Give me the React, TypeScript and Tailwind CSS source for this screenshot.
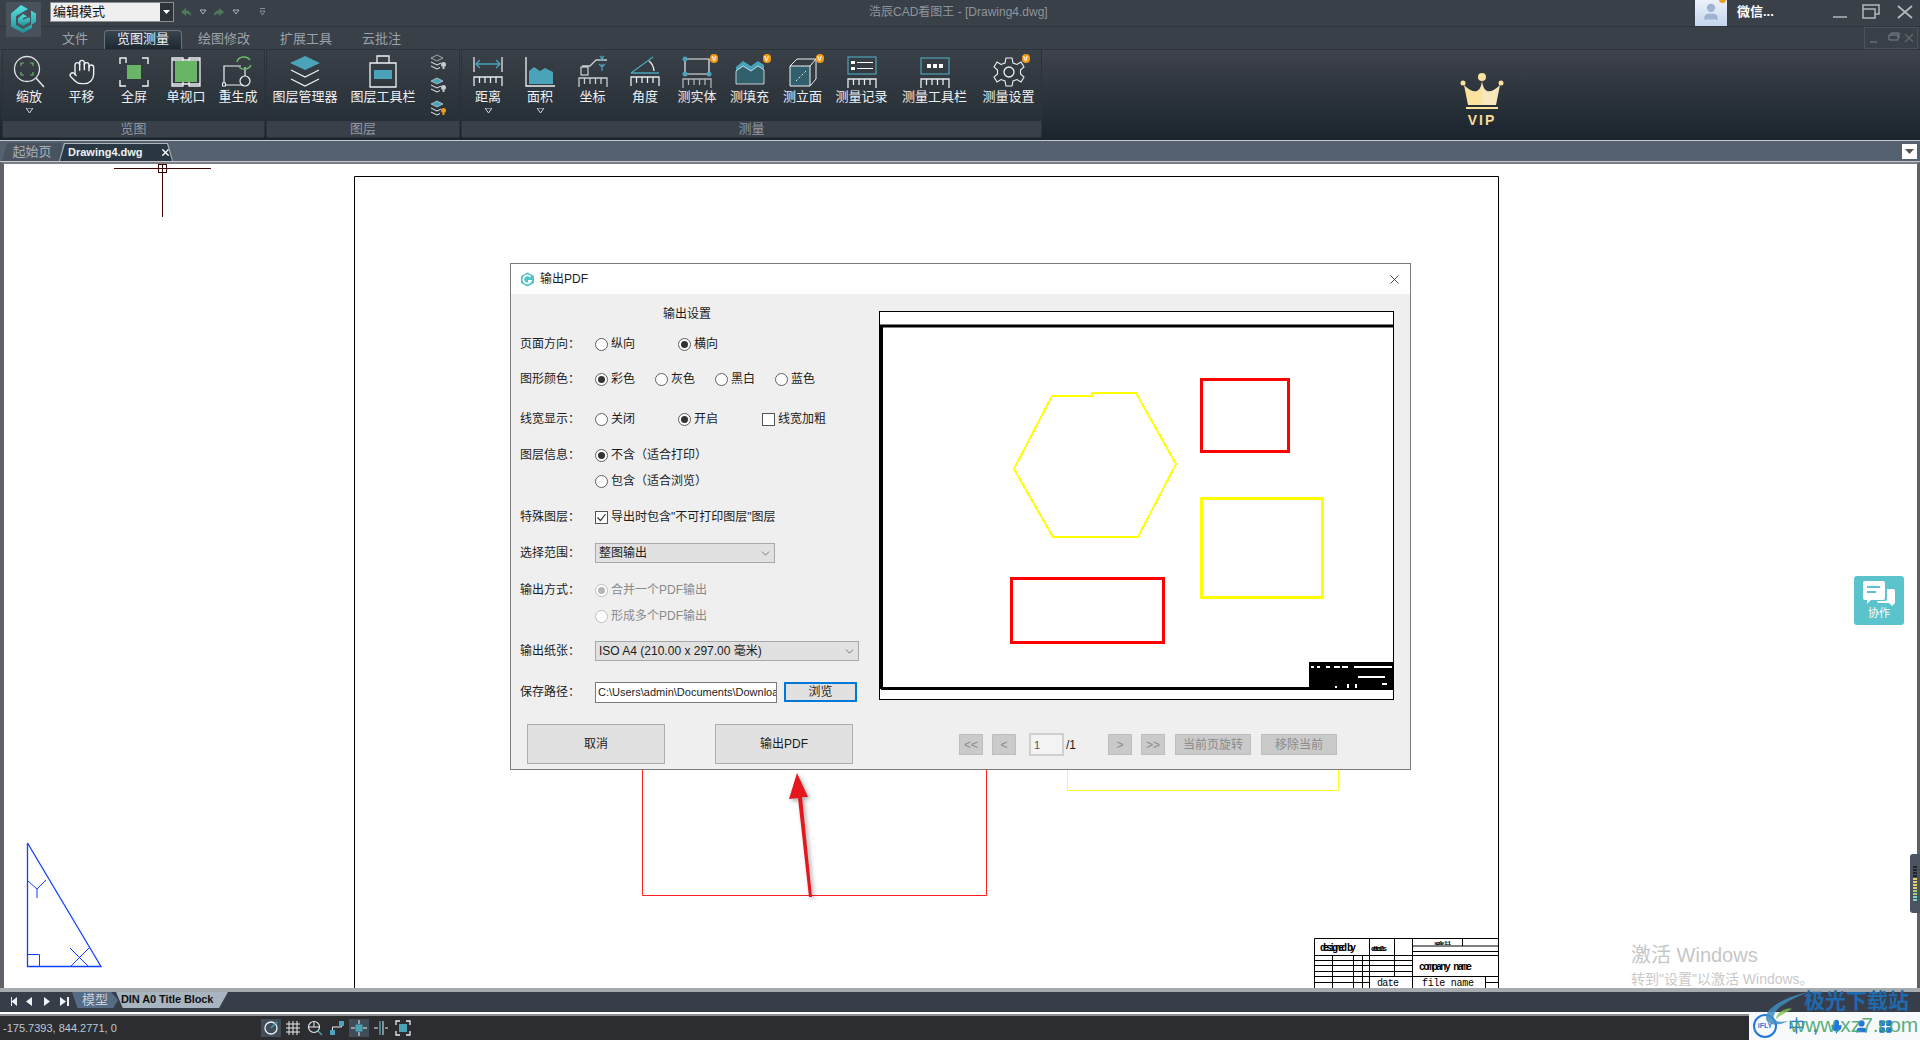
import { Hand, Mic, User, LayoutGrid, X, ChevronDown } from "lucide-react";
import type { ReactNode } from "react";

const Tri = ({ className = "" }: { className?: string }) => (
  <svg width="7" height="5" viewBox="0 0 7 5" className={className}>
    <path d="M0 0H7L3.5 5Z" fill="none" stroke="#d5d9dd" strokeWidth="1" />
  </svg>
);

const Ruler = ({ y = 24, c = "#e8ecef" }: { y?: number; c?: string }) => (
  <path d={`M3 ${y + 9}V${y}H31V${y + 9}M8.5 ${y}V${y + 6}M14 ${y}V${y + 6}M19.500 ${y}V${y + 6}M25 ${y}V${y + 6}`} fill="none" stroke={c} strokeWidth="1.3" />
);

const Svg = ({ children }: { children: ReactNode }) => (
  <svg width="34" height="34" viewBox="0 0 34 34" fill="none">
    {children}
  </svg>
);

const Logo = () => (
  <svg width="35" height="35" viewBox="0 0 35 35" className="absolute left-[6px] top-[2px]">
    <defs>
      <linearGradient id="logo" x1="0" x2="0" y1="0" y2="1">
        <stop offset="0" stopColor="#52e3e0" />
        <stop offset="1" stopColor="#239096" />
      </linearGradient>
    </defs>
    <rect width="35" height="35" fill="#47525c" />
    <path d="M15 3L22 7L10 14V23L17 27L26 22V26L17 31L5 24.500V11.500ZM25 8.500L30 11.500V20L25 23Z" fill="url(#logo)" />
    <path d="M17 12L24 16V20L17 24L12 21V16.500Z" fill="url(#logo)" />
    <path d="M17 17L24 14" stroke="#47525c" strokeWidth="1.500" />
  </svg>
);

const ZoomIcon = () => (
  <Svg>
    <circle cx="15" cy="14" r="12.500" stroke="#dfe3e6" strokeWidth="1.3" />
    <path d="M24 23L32 32" stroke="#dfe3e6" strokeWidth="1.6" />
    <path d="M9 11V8H12M18 8H21V11M21 17V20H18M12 20H9V17" stroke="#6ab565" strokeWidth="1.2" />
  </Svg>
);
const FullIcon = () => (
  <Svg>
    <path d="M9 8V3H3V3M3 9V3H9M25 3H31V9M31 25V31H25M9 31H3V25" stroke="#f0f2f4" strokeWidth="1.4" />
    <rect x="10" y="10" width="14" height="14" fill="#6ab565" />
  </Svg>
);
const ViewIcon = () => (
  <Svg>
    <path d="M3 3H14V31H3ZM20 3H31V31H20ZM3 5H31M3 29H31" stroke="#eef1f3" strokeWidth="1.3" />
    <rect x="6" y="6" width="22" height="21" fill="#6ab565" />
  </Svg>
);
const RegenIcon = () => (
  <Svg>
    <path d="M3 30V11H20M3 30H22" stroke="#eef1f3" strokeWidth="1.200" />
    <rect x="1.500" y="28" width="3" height="3" fill="#2a333b" stroke="#eef1f3" />
    <circle cx="24" cy="26" r="5" stroke="#eef1f3" strokeWidth="1.200" />
    <path d="M24 21V12" stroke="#eef1f3" strokeWidth="1.200" />
    <path d="M16 7A7 6 0 0 1 29 5M30 10A7 6 0 0 1 18 12" stroke="#6ab565" strokeWidth="1.500" />
  </Svg>
);
const LayerIcon = () => (
  <Svg>
    <path d="M17 1L32 8L17 15L2 8Z" fill="#4aa3b8" />
    <path d="M3 15L17 22L31 15M3 24L17 31L31 24" stroke="#eef1f3" strokeWidth="1.300" />
  </Svg>
);
const LayerBarIcon = () => (
  <Svg>
    <path d="M11 8V1H23V8M4 8H30V32H4Z" stroke="#eef1f3" strokeWidth="1.300" />
    <rect x="8" y="15" width="18" height="9" fill="#4aa3b8" />
  </Svg>
);
const SmallLayer = ({ top, dot }: { top: string; dot: string }) => (
  <svg width="16" height="18" viewBox="0 0 16 18" fill="none">
    <path d="M6 1L12 4L6 7L0 4Z" fill={top} stroke="#e8ecef" strokeWidth=".6" />
    <path d="M0 8L6 11L10 9M0 12L6 15L9 13.500" stroke="#e8ecef" />
    <circle cx="12.500" cy="10.500" r="2.500" fill={dot} />
    <rect x="11.500" y="13" width="2" height="2" fill={dot} />
  </svg>
);
const DistIcon = () => (
  <Svg>
    <path d="M3 2V17M31 2V17" stroke="#eef1f3" strokeWidth="1.200" />
    <path d="M5 9H29M9 5L5 9L9 13M25 5L29 9L25 13" stroke="#4aa3b8" strokeWidth="1.400" />
    <Ruler y={22} />
  </Svg>
);
const AreaIcon = () => (
  <Svg>
    <path d="M3 2V31H32" stroke="#eef1f3" strokeWidth="1.300" />
    <path d="M6 29V16L11 12L17 16L22 13L30 17V29Z" fill="#4aa3b8" />
  </Svg>
);
const CoordIcon = () => (
  <Svg>
    <path d="M6 11H14L20 5H31" stroke="#c9ced2" strokeWidth="1.300" />
    <path d="M24 1L28 5M28 1L24 5M26 9V16M23 9L26 12L29 9" stroke="#4aa3b8" strokeWidth="1.200" />
    <rect x="5" y="12" width="7" height="8" stroke="#eef1f3" />
    <Ruler y={23} c="#c9ced2" />
  </Svg>
);
const AngleIcon = () => (
  <Svg>
    <path d="M3 18L25 2M3 18H31" stroke="#4aa3b8" strokeWidth="1.300" />
    <path d="M21 6A14 14 0 0 1 26 16" stroke="#eef1f3" strokeWidth="1.300" />
    <Ruler y={22} />
  </Svg>
);
const SolidIcon = () => (
  <Svg>
    <path d="M5 4H29V19H5Z" stroke="#eef1f3" strokeWidth="1.200" />
    <circle cx="5" cy="4" r="2.500" fill="#4aa3b8" />
    <circle cx="29" cy="19" r="2.500" fill="#4aa3b8" />
    <circle cx="5" cy="19" r="2.500" fill="#4aa3b8" />
    <Ruler y={24} c="#aeb3b7" />
  </Svg>
);
const FillIcon = () => (
  <Svg>
    <path d="M3 12L10 6L18 11L25 6L31 10V29H3Z" fill="#4aa3b8" />
    <path d="M3 16L10 11L18 16L25 11L31 15V29H3Z" fill="#31606c" stroke="#e8ecef" strokeWidth=".8" />
  </Svg>
);
const ElevIcon = () => (
  <Svg>
    <path d="M4 11H24V31H4Z" fill="#31606c" stroke="#eef1f3" />
    <path d="M4 11L11 4H30V24L24 31M24 11L30 4" stroke="#eef1f3" />
    <path d="M10 26L20 16" stroke="#e8ecef" strokeDasharray="2 2" />
  </Svg>
);
const LogIcon = () => (
  <Svg>
    <rect x="3" y="2" width="28" height="17" stroke="#4aa3b8" strokeWidth="1.200" />
    <path d="M6 6H10V9H6ZM6 12H10V15H6Z" fill="#fff" />
    <path d="M12 7.500H28M12 13.500H28" stroke="#fff" />
    <Ruler y={24} />
  </Svg>
);
const BarIcon = () => (
  <Svg>
    <rect x="3" y="3" width="28" height="16" stroke="#4aa3b8" strokeWidth="1.200" />
    <path d="M9 9H13V13H9ZM15 9H19V13H15ZM21 9H25V13H21Z" fill="#fff" />
    <Ruler y={24} />
  </Svg>
);
const GearIcon = () => (
  <Svg>
    <circle cx="17" cy="17" r="5" stroke="#eef1f3" strokeWidth="1.300" />
    <path d="M14 3H20L21 8L25 9.500L29 7L32 12L28.500 15V19L32 22L29 27L25 24.500L21 26L20 31H14L13 26L9 24.500L5 27L2 22L5.500 19V15L2 12L5 7L9 9.500L13 8Z" stroke="#eef1f3" strokeWidth="1.100" />
  </Svg>
);

type Item = { label: string; w: string; icon: ReactNode; vip?: boolean; more?: boolean };

const RibbonItem = ({ label, w, icon, vip, more }: Item) => (
  <div className={`${w} flex h-[71px] shrink-0 flex-col items-center pt-[5px]`}>
    <div className="relative flex h-[34px] items-center justify-center">
      {icon}
      {vip && (
        <span className="absolute -right-[4px] -top-[1px] flex h-[9px] w-[8px] items-center justify-center rounded-full bg-[#f29a13] text-[7px] font-bold leading-none text-white">
          V
        </span>
      )}
    </div>
    <span className="-mt-[1px] whitespace-nowrap text-[13px] leading-[18px] text-[#eef1f4]">{label}</span>
    {more && <Tri className="mt-[2px]" />}
  </div>
);

const Panel = ({ w, title, children }: { w: string; title: string; children: ReactNode }) => (
  <div className={`${w} flex h-[87px] flex-col rounded-[2px] bg-[linear-gradient(#3a4048,#222b33)] shadow-[0_0_0_1px_#2c3239]`}>
    <div className="flex h-[71px]">{children}</div>
    <div className="h-[16px] bg-[#3a4049] text-center text-[13px] leading-[15px] text-[#8e98a3]">{title}</div>
  </div>
);

const Radio = ({ on, off, label, w = "" }: { on?: boolean; off?: boolean; label: string; w?: string }) => (
  <div className={`${w} flex items-center gap-[3px]`}>
    <span className={`flex h-[13px] w-[13px] items-center justify-center rounded-full border bg-white ${off ? "border-[#bdbdbd]" : "border-[#5f5f5f]"}`}>
      {on && <span className={`h-[7px] w-[7px] rounded-full ${off ? "bg-[#b5b5b5]" : "bg-[#333333]"}`} />}
    </span>
    <span className={off ? "text-[#8a8a8a]" : ""}>{label}</span>
  </div>
);

const Row = ({ label, className, children }: { label?: string; className: string; children?: ReactNode }) => (
  <div className={`${className} flex h-[20px] items-center`}>
    <span className="w-[75px] shrink-0">{label}</span>
    {children}
  </div>
);

const Select = ({ w, text }: { w: string; text: string }) => (
  <div className={`${w} flex h-[20px] items-center justify-between border border-[#a8a8a8] bg-[#e1e1e1] pl-[3px] pr-[2px]`}>
    <span>{text}</span>
    <ChevronDown size={13} strokeWidth={1.2} color="#444" />
  </div>
);

const NavBtn = ({ w, ml, children }: { w: string; ml: string; children: ReactNode }) => (
  <div className={`${w} ${ml} flex h-[21px] items-center justify-center border border-[#bdbdbd] bg-[#cacaca] text-[12px] text-[#8b8b8b]`}>
    {children}
  </div>
);

const HEX = "1052,396 1092,396 1092,393 1136,393 1176,464 1138,537 1053,537 1014,469";

const Preview = () => (
  <svg width="515" height="389" viewBox="879 311 515 389" className="block">
    <rect x="879.500" y="311.500" width="514" height="388" fill="#fff" stroke="#000" />
    <path d="M880 326H1393M881.500 325V689M881 688.500H1393" stroke="#000" strokeWidth="3" fill="none" />
    <polygon points={HEX} fill="none" stroke="#ffff00" strokeWidth="2" shapeRendering="crispEdges" />
    <rect x="1201.500" y="379.500" width="87" height="72" fill="none" stroke="#ff0000" strokeWidth="3" />
    <rect x="1201.500" y="498.500" width="121" height="99" fill="none" stroke="#ffff00" strokeWidth="3" />
    <rect x="1011.500" y="578.500" width="152" height="64" fill="none" stroke="#ff0000" strokeWidth="3" />
    <rect x="1309" y="662" width="84" height="26" fill="#000" />
    <path d="M1311 667H1314M1317 667H1320M1326 667H1330M1334 667H1340M1342 667H1348M1354 667H1358M1358 667H1392M1358 677H1385M1336 686V688M1348 684V688M1356 684V688M1382 684H1387" stroke="#fff" strokeWidth="2" fill="none" />
  </svg>
);

const Dialog = () => (
  <div className="absolute left-[506px] top-[99px] flex h-[507px] w-[901px] flex-col border border-[#7c7c7c] bg-[#efefef] text-[12px] leading-[16px] text-[#1c1c1c]">
    <div className="flex h-[30px] shrink-0 items-center bg-white pl-[9px] pr-[8px]">
      <svg width="15" height="15" viewBox="0 0 15 15" fill="none">
        <path d="M7.500 .5L14 4V11L7.500 14.500L1 11V4Z" fill="#4fc3c8" />
        <path d="M10.500 5A4 4 0 1 0 11 9H8" stroke="#fff" strokeWidth="1.800" />
      </svg>
      <span className="ml-[5px]">输出PDF</span>
      <X size={15} strokeWidth={1.3} className="ml-auto" color="#222" />
    </div>
    <div className="flex flex-1">
      <div className="w-[368px] shrink-0 pl-[9px] pt-[10px]">
        <div className="h-[20px] pl-[143px] leading-[20px]">输出设置</div>
        <Row label="页面方向：" className="mt-[10px]">
          <Radio label="纵向" w="w-[83px]" />
          <Radio label="横向" on />
        </Row>
        <Row label="图形颜色：" className="mt-[15px]">
          <Radio label="彩色" on w="w-[60px]" />
          <Radio label="灰色" w="w-[60px]" />
          <Radio label="黑白" w="w-[60px]" />
          <Radio label="蓝色" />
        </Row>
        <Row label="线宽显示：" className="mt-[20px]">
          <Radio label="关闭" w="w-[83px]" />
          <Radio label="开启" on w="w-[84px]" />
          <span className="h-[13px] w-[13px] border border-[#555] bg-white" />
          <span className="ml-[3px]">线宽加粗</span>
        </Row>
        <Row label="图层信息：" className="mt-[16px]">
          <Radio label="不含（适合打印）" on />
        </Row>
        <Row className="mt-[6px]">
          <Radio label="包含（适合浏览）" />
        </Row>
        <Row label="特殊图层：" className="mt-[16px]">
          <span className="flex h-[13px] w-[13px] items-center justify-center border border-[#555] bg-white">
            <svg width="11" height="11" viewBox="0 0 11 11" fill="none">
              <path d="M1.500 5.500L4.500 8.500L9.500 2" stroke="#333" strokeWidth="1.200" />
            </svg>
          </span>
          <span className="ml-[3px] whitespace-nowrap">导出时包含"不可打印图层"图层</span>
        </Row>
        <Row label="选择范围：" className="mt-[16px]">
          <Select w="w-[180px]" text="整图输出" />
        </Row>
        <Row label="输出方式：" className="mt-[17px]">
          <Radio label="合并一个PDF输出" on off />
        </Row>
        <Row className="mt-[6px]">
          <Radio label="形成多个PDF输出" off />
        </Row>
        <Row label="输出纸张：" className="mt-[15px]">
          <Select w="w-[264px]" text="ISO A4 (210.00 x 297.00 毫米)" />
        </Row>
        <Row label="保存路径：" className="mt-[21px]">
          <div className="flex h-[21px] w-[182px] items-center overflow-hidden whitespace-nowrap border border-[#7a7a7a] bg-white pl-[2px] text-[11px]">
            {"C:\\Users\\admin\\Documents\\Downloa"}
          </div>
          <div className="ml-[7px] flex h-[20px] w-[73px] items-center justify-center border-2 border-[#0078d7] bg-[#e1e1e1]">浏览</div>
        </Row>
        <div className="mt-[22px] flex pl-[7px]">
          <div className="flex h-[40px] w-[138px] items-center justify-center border border-[#adadad] bg-[#e1e1e1]">取消</div>
          <div className="ml-[50px] flex h-[40px] w-[138px] items-center justify-center border border-[#adadad] bg-[#e1e1e1]">输出PDF</div>
        </div>
      </div>
      <div className="flex-1 pt-[17px]">
        <Preview />
        <div className="mt-[33px] flex items-center">
          <NavBtn w="w-[24px]" ml="ml-[80px]">&lt;&lt;</NavBtn>
          <NavBtn w="w-[24px]" ml="ml-[9px]">&lt;</NavBtn>
          <div className="ml-[13px] flex h-[23px] w-[35px] items-center border-2 border-[#cfcfcf] bg-[#f3f3f3] pl-[3px] text-[11px] text-[#555]">1</div>
          <span className="ml-[2px] w-[42px]">/1</span>
          <NavBtn w="w-[24px]" ml="">&gt;</NavBtn>
          <NavBtn w="w-[24px]" ml="ml-[9px]">&gt;&gt;</NavBtn>
          <NavBtn w="w-[76px]" ml="ml-[10px]">当前页旋转</NavBtn>
          <NavBtn w="w-[76px]" ml="ml-[10px]">移除当前</NavBtn>
        </div>
      </div>
    </div>
  </div>
);

const CadDrawing = () => (
  <svg width="1913" height="824" viewBox="4 164 1913 824" className="absolute left-0 top-0" fill="none">
    <path d="M354.500 988V176.500H1498.500V988" stroke="#000" />
    <path d="M114 168.500H211M162.500 163V217" stroke="#3a0505" />
    <rect x="158.500" y="164.500" width="8" height="8" stroke="#3a0505" />
    <path d="M642.500 760V895.500H986.500V760" stroke="#ff2020" />
    <path d="M1067.500 760V790.500H1338.500V760" stroke="#ffff20" />
    <path d="M27.500 843V966.500H101L27.500 843" stroke="#1040ff" strokeWidth="1.300" />
    <path d="M27.500 954.500H39.500V966M28 881L37 889L46 880M37 889V898M70 948L88 966M71 966L89 948" stroke="#1040ff" />
    <path d="M1314.500 988V938.500H1498M1369.500 938V988M1394.500 938V976M1412.500 938V988M1412 951.500H1498M1412 955.500H1498M1314 955.500H1412M1314 960.500H1412M1314 965.500H1412M1314 971.500H1412M1314 976.500H1498M1314 982.500H1369M1412 946H1498M1462.500 938V946M1485.500 976V988M1485 982.500H1498M1332.500 956V988M1353.500 956V988M1362.500 956V988" stroke="#000" />
    <text x="1320" y="951" fontSize="10" fontWeight="700" fontFamily="Liberation Mono, monospace" fill="#000" textLength="36">designed by</text>
    <text x="1371" y="951" fontSize="8" fontWeight="700" fontFamily="Liberation Mono, monospace" fill="#000" textLength="16">details</text>
    <text x="1434" y="945" fontSize="6" fontWeight="700" fontFamily="Liberation Mono, monospace" fill="#000" textLength="17">scale 1:1</text>
    <text x="1419" y="970" fontSize="10" fontWeight="700" fontFamily="Liberation Mono, monospace" fill="#000" textLength="53">company name</text>
    <text x="1377" y="986" fontSize="10" fontFamily="Liberation Mono, monospace" fill="#000" textLength="22">date</text>
    <text x="1422" y="986" fontSize="10" fontFamily="Liberation Mono, monospace" fill="#000" textLength="52">file name</text>
  </svg>
);

const StatusIcon = ({ active, children }: { active?: boolean; children: ReactNode }) => (
  <div className={`flex h-[18px] w-[20px] items-center justify-center ${active ? "bg-[#404c57]" : ""} mr-[2px]`}>
    <svg width="16" height="16" viewBox="0 0 16 16" fill="none">
      {children}
    </svg>
  </div>
);

const ribbonFirst: Item[] = [
  { label: "缩放", w: "w-[52px]", icon: <ZoomIcon />, more: true },
  { label: "平移", w: "w-[53px]", icon: <Hand size={28} strokeWidth={1.200} color="#eef1f3" /> },
  { label: "全屏", w: "w-[52px]", icon: <FullIcon /> },
  { label: "单视口", w: "w-[52px]", icon: <ViewIcon /> },
  { label: "重生成", w: "w-[52px]", icon: <RegenIcon /> },
];

const ribbonMeasure: Item[] = [
  { label: "距离", w: "w-[52px]", icon: <DistIcon />, more: true },
  { label: "面积", w: "w-[52px]", icon: <AreaIcon />, more: true },
  { label: "坐标", w: "w-[53px]", icon: <CoordIcon /> },
  { label: "角度", w: "w-[52px]", icon: <AngleIcon /> },
  { label: "测实体", w: "w-[52px]", icon: <SolidIcon />, vip: true },
  { label: "测填充", w: "w-[53px]", icon: <FillIcon />, vip: true },
  { label: "测立面", w: "w-[53px]", icon: <ElevIcon />, vip: true },
  { label: "测量记录", w: "w-[65px]", icon: <LogIcon /> },
  { label: "测量工具栏", w: "w-[81px]", icon: <BarIcon /> },
  { label: "测量设置", w: "w-[67px]", icon: <GearIcon />, vip: true },
];

export default function App() {
  return (
    <div className="relative flex h-[1040px] w-[1920px] flex-col overflow-hidden bg-[#3a4048] font-['Liberation_Sans','Noto_Sans_CJK_SC',sans-serif]">
      <Logo />
      {/* 标题栏 */}
      <div className="flex h-[27px] shrink-0 items-center border-b border-[#30353c] bg-[#3a4048] pb-[2px] pl-[50px]">
        <div className="flex h-[20px] w-[124px] items-center border border-[#8a9096]">
          <span className="flex h-full flex-1 items-center bg-[#efefef] pl-[2px] text-[13px] text-[#111]">编辑模式</span>
          <span className="flex h-full w-[13px] items-center justify-center bg-[#2e3339]">
            <svg width="7" height="4" viewBox="0 0 7 4"><path d="M0 0H7L3.500 4Z" fill="#fff" /></svg>
          </span>
        </div>
        <svg width="90" height="14" viewBox="0 0 90 14" className="ml-[6px]" fill="none">
          <path d="M6 3L1 7L6 11V8.500C9 8.500 10 10 11 11C11 7 9 5.500 6 5.500Z" fill="#4f7a5a" />
          <path d="M20 5H26L23 9Z" stroke="#c8ccd0" strokeWidth=".8" />
          <path d="M39 3L44 7L39 11V8.500C36 8.500 35 10 34 11C34 7 36 5.500 39 5.500Z" fill="#4f7a5a" />
          <path d="M53 5H59L56 9Z" stroke="#c8ccd0" strokeWidth=".8" />
          <path d="M80 3.500H85M80 6H85L82.500 10Z" stroke="#9aa0a6" strokeWidth=".8" />
        </svg>
        <span className="ml-[599px] w-[180px] whitespace-nowrap text-[12px] text-[#8d959e]">浩辰CAD看图王 - [Drawing4.dwg]</span>
        <div className="relative ml-[646px] flex h-[27px] w-[32px] items-center justify-center bg-[linear-gradient(#eef3fa,#c5d5ec)]">
          <User size={20} fill="#9fb3d1" color="#9fb3d1" />
          <span className="absolute -top-[3px] right-[1px] h-[7px] w-[7px] rounded-full bg-[#f29a13]" />
        </div>
        <span className="ml-[10px] w-[40px] whitespace-nowrap text-[13px] font-bold text-white">微信...</span>
        <svg width="95" height="16" viewBox="0 0 95 16" className="ml-[42px]" fill="none" stroke="#b4b8bc" strokeWidth="1.500">
          <path d="M14 13H28M44 5V1H60V10H56M44 5H56V14H44Z" />
          <path d="M79 2L93 14M93 2L79 14" strokeWidth="1.800" />
        </svg>
      </div>

      {/* 菜单 */}
      <div className="flex h-[22px] shrink-0 items-end pl-[62px] text-[13px] text-[#9aa3ab]">
        <div className="flex h-[19px] w-[42px] items-center pb-[2px]">文件</div>
        <div className="flex h-[19px] w-[78px] items-center justify-center rounded-t-[4px] border border-b-0 border-[#6b737b] bg-[linear-gradient(#3a444e,#1d2932)] pb-[2px] text-[#eef1f4]">览图测量</div>
        <div className="ml-[16px] flex h-[19px] w-[82px] items-center pb-[2px]">绘图修改</div>
        <div className="flex h-[19px] w-[82px] items-center pb-[2px]">扩展工具</div>
        <div className="flex h-[19px] w-[60px] items-center pb-[2px]">云批注</div>
        <div className="ml-auto mr-[2px] flex h-[22px] w-[54px] items-center justify-center gap-[8px] border border-[#4b525a]">
          <svg width="44" height="12" viewBox="0 0 44 12" fill="none" stroke="#7d8389">
            <path d="M1 10H8M20 3H29V8H20ZM22 3V1H30V6" />
            <path d="M36 2L44 10M44 2L36 10" strokeWidth="1.600" stroke="#5e6369" />
          </svg>
        </div>
      </div>

      {/* 功能区 */}
      <div className="flex h-[91px] shrink-0 gap-[3px] border-t border-[#2e343b] bg-[linear-gradient(#3f434b,#1a242c)] pl-[3px]">
        <Panel w="w-[261px]" title="览图">
          {ribbonFirst.map((i) => (
            <RibbonItem key={i.label} {...i} />
          ))}
        </Panel>
        <Panel w="w-[192px]" title="图层">
          <RibbonItem label="图层管理器" w="w-[76px]" icon={<LayerIcon />} />
          <RibbonItem label="图层工具栏" w="w-[80px]" icon={<LayerBarIcon />} />
          <div className="flex w-[32px] flex-col items-center gap-[5px] pt-[4px]">
            <SmallLayer top="#39424a" dot="#c8ccd0" />
            <SmallLayer top="#4aa3b8" dot="#c8ccd0" />
            <SmallLayer top="#4aa3b8" dot="#f29a13" />
          </div>
        </Panel>
        <Panel w="w-[579px]" title="测量">
          {ribbonMeasure.map((i) => (
            <RibbonItem key={i.label} {...i} />
          ))}
        </Panel>
        <div className="ml-[413px] flex h-[87px] w-[50px] flex-col items-center pt-[23px]">
          <svg width="44" height="37" viewBox="0 0 44 37">
            <defs>
              <linearGradient id="crown" x1="0" x2="1" y1="0" y2="0">
                <stop offset=".5" stopColor="#fbe29f" />
                <stop offset=".5" stopColor="#f8e7bd" />
              </linearGradient>
            </defs>
            <circle cx="22" cy="4" r="4" fill="#fbe29f" />
            <circle cx="3" cy="10" r="2.500" fill="#fbe29f" />
            <circle cx="41" cy="10" r="2.500" fill="#fbe29f" />
            <path d="M22 7C23 20 30 22 40 12L36 32H8L4 12C14 22 21 20 22 7Z" fill="url(#crown)" />
            <rect x="6" y="34" width="32" height="2" fill="#fbe29f" />
          </svg>
          <span className="mt-[2px] text-[14px] font-bold leading-[16px] tracking-[2px] text-[#f7dd99]">VIP</span>
        </div>
      </div>

      {/* 文档标签 */}
      <div className="flex h-[22px] shrink-0 items-end border-y border-y-[#c4c8cc] bg-[#566170] pl-[2px]">
        <div className="flex h-[18px] w-[60px] items-center justify-center bg-[#495360] text-[13px] text-[#a8b0b9] [clip-path:polygon(5px_0,100%_0,100%_100%,0_100%)]">起始页</div>
        <div className="-ml-[3px] h-[18px] w-[114px] bg-[#aab2ba] pl-[1px] pr-[1px] pt-[1px] [clip-path:polygon(5px_0,calc(100%_-_5px)_0,100%_100%,0_100%)]">
          <div className="flex h-[17px] items-center bg-[#2a3844] pl-[8px] text-[11px] font-bold text-[#eef1f4] [clip-path:polygon(5px_0,calc(100%_-_5px)_0,100%_100%,0_100%)]">
            Drawing4.dwg
            <X size={11} strokeWidth={3} color="#fff" className="ml-[17px]" />
          </div>
        </div>
        <div className="ml-auto mb-[2px] mr-[3px] flex h-[15px] w-[15px] items-center justify-center bg-white">
          <svg width="9" height="5" viewBox="0 0 9 5"><path d="M0 0H9L4.500 5Z" fill="#555" /></svg>
        </div>
      </div>

      {/* 绘图区 */}
      <div className="relative flex-1 border-x-4 border-t-2 border-x-[#5e6266] border-t-[#7c8084] border-r-[3px] bg-white">
        <CadDrawing />
        <Dialog />
        <svg width="40" height="135" viewBox="780 765 40 135" className="absolute left-[776px] top-[601px] drop-shadow-[2px_2px_2px_rgba(0,0,0,0.35)]">
          <path d="M797 773L808 797L802 797L812 897L809 897L798 798L789 799Z" fill="#e3171d" />
        </svg>
        <span className="absolute left-[1627px] top-[778px] text-[20px] leading-[26px] text-[#c6c6c6]">激活 Windows</span>
        <span className="absolute left-[1627px] top-[805px] whitespace-nowrap text-[14px] leading-[20px] text-[#c9c9c9]">转到"设置"以激活 Windows。</span>
        <div className="absolute left-[1850px] top-[412px] flex h-[49px] w-[50px] flex-col items-center rounded-[3px] bg-[#5bc3cc] pt-[5px]">
          <svg width="32" height="25" viewBox="0 0 32 25" fill="#fff">
            <path d="M2 0H20Q22 0 22 2V17Q22 19 20 19H8L4 23V19H2Q0 19 0 17V2Q0 0 2 0Z" />
            <path d="M4 6H17M4 11H13" stroke="#5bc3cc" strokeWidth="2" />
            <path d="M24 8H30Q32 8 32 10V22L29 25L26 22H16Q14 22 14 20H22Q24 20 24 18Z" />
          </svg>
          <span className="text-[11px] leading-[15px] text-white">协作</span>
        </div>
      </div>

      {/* 布局标签 */}
      <div className="flex h-[24px] shrink-0 items-start border-t-4 border-t-[#a6abaf] bg-[#373e4a] pl-[8px]">
        <svg width="64" height="20" viewBox="0 0 64 20" fill="#eef1f4">
          <path d="M2 5V14M3 5H4V14H3M3.500 9.500L9 5V14Z" />
          <path d="M24 5L18 9.500L24 14Z" />
          <path d="M36 5L42 9.500L36 14Z" />
          <path d="M52 5L58 9.500L52 14ZM59 5H61V14H59Z" />
        </svg>
        <div className="flex h-[16px] w-[46px] items-center justify-center bg-[#566b84] text-[13px] text-[#c6d0da] [clip-path:polygon(0_0,85%_0,100%_50%,90%_100%,12%_100%)]">模型</div>
        <div className="-ml-[2px] flex h-[16px] w-[112px] items-center bg-[#a9b4c1] pb-[1px] pl-[5px] text-[11px] font-bold tracking-[-0.1px] text-[#111] [clip-path:polygon(0_0,100%_0,92%_100%,6%_100%)]">DIN A0 Title Block</div>
      </div>
      <div className="h-[4px] shrink-0 border-t-2 border-t-white bg-[#8b8f93]" />

      {/* 状态栏 */}
      <div className="flex h-[24px] shrink-0 items-center bg-[#2c2d30] pl-[3px]">
        <span className="w-[258px] text-[11px] text-[#bcc9d5]">-175.7393, 844.2771, 0</span>
        <StatusIcon active>
          <circle cx="8" cy="8" r="6" stroke="#e8ecef" strokeWidth="1.400" />
          <path d="M8 8L14 2" stroke="#4aa3b8" strokeWidth="1.400" />
        </StatusIcon>
        <StatusIcon>
          <path d="M4 1V15M8 1V15M12 1V15M1 4H15M1 8H15M1 12H15" stroke="#e8ecef" />
        </StatusIcon>
        <StatusIcon>
          <circle cx="7" cy="7" r="5.500" stroke="#e8ecef" strokeWidth="1.200" />
          <path d="M1.500 7H12.500M7 2V7" stroke="#e8ecef" />
          <path d="M11 11L15 15" stroke="#4aa3b8" strokeWidth="1.500" />
        </StatusIcon>
        <StatusIcon>
          <rect x="1" y="10" width="5" height="5" fill="#4aa3b8" />
          <rect x="10" y="1" width="5" height="5" fill="#4aa3b8" />
          <path d="M3.500 10V7H12.500V6" stroke="#e8ecef" />
        </StatusIcon>
        <StatusIcon active>
          <rect x="4.500" y="4.500" width="7" height="7" fill="#4aa3b8" />
          <path d="M8 0V4M8 12V16M0 8H4M12 8H16" stroke="#e8ecef" />
        </StatusIcon>
        <StatusIcon>
          <path d="M7 1V15" stroke="#4aa3b8" strokeWidth="1.500" />
          <path d="M10 1V15" stroke="#e8ecef" />
          <path d="M1 8H5M15 8H12" stroke="#e8ecef" />
        </StatusIcon>
        <StatusIcon>
          <path d="M5 1H1V5M11 1H15V5M15 11V15H11M5 15H1V11" stroke="#e8ecef" strokeWidth="1.300" />
          <rect x="4" y="4" width="8" height="8" fill="#4aa3b8" />
        </StatusIcon>
      </div>

      {/* 站点水印 */}
      <div className="absolute left-[1749px] top-[1012px] flex h-[28px] w-[171px] items-center bg-[#f7f9fb] pl-[4px]">
        <span className="flex h-[24px] w-[24px] items-center justify-center rounded-full border-2 border-[#2277dd] text-[7px] font-bold text-[#2277dd]">iFLY</span>
        <span className="ml-[11px] text-[17px] leading-none text-[#2277dd]">中</span>
        <span className="ml-[8px] text-[17px] font-bold leading-none text-[#2277dd]">,</span>
        <Mic size={15} fill="#2277dd" color="#2277dd" className="ml-[11px]" />
        <User size={15} fill="#2277dd" color="#2277dd" className="ml-[10px]" />
        <LayoutGrid size={15} fill="#2277dd" color="#2277dd" className="ml-[9px]" />
      </div>
      <svg width="48" height="40" viewBox="0 0 48 40" className="absolute left-[1762px] top-[991px]" fill="none">
        <path d="M46 1C24 6 4 16 4 27C4 34 16 36 26 30C16 32 10 30 12 24C15 15 30 8 46 1Z" fill="#3f8dbf" fillOpacity=".85" />
        <path d="M30 18C24 16 14 22 14 28C18 24 24 22 30 18Z" fill="#7cc04c" fillOpacity=".8" />
      </svg>
      <span className="absolute left-[1804px] top-[986px] whitespace-nowrap text-[21px] font-bold leading-[30px] text-[#1f69ae]">极光下载站</span>
      <span className="absolute left-[1790px] top-[1012px] whitespace-nowrap text-[21px] leading-[26px] text-[#45a56d]/90">www.xz7.com</span>
      <div className="absolute left-[1910px] top-[854px] flex h-[59px] w-[10px] flex-col items-center justify-center gap-[1px] rounded-l-[3px] bg-[#4c5360]">
        {["#22262c", "#22262c", "#22262c", "#22262c", "#e3cf62", "#e3cf62", "#e3cf62", "#e3cf62", "#9bd37b", "#9bd37b", "#7ad8c8", "#7ad8c8"].map((c, i) => (
          <span key={i} className="h-[2px] w-[4px]" style={{ backgroundColor: c }} />
        ))}
      </div>
    </div>
  );
}
